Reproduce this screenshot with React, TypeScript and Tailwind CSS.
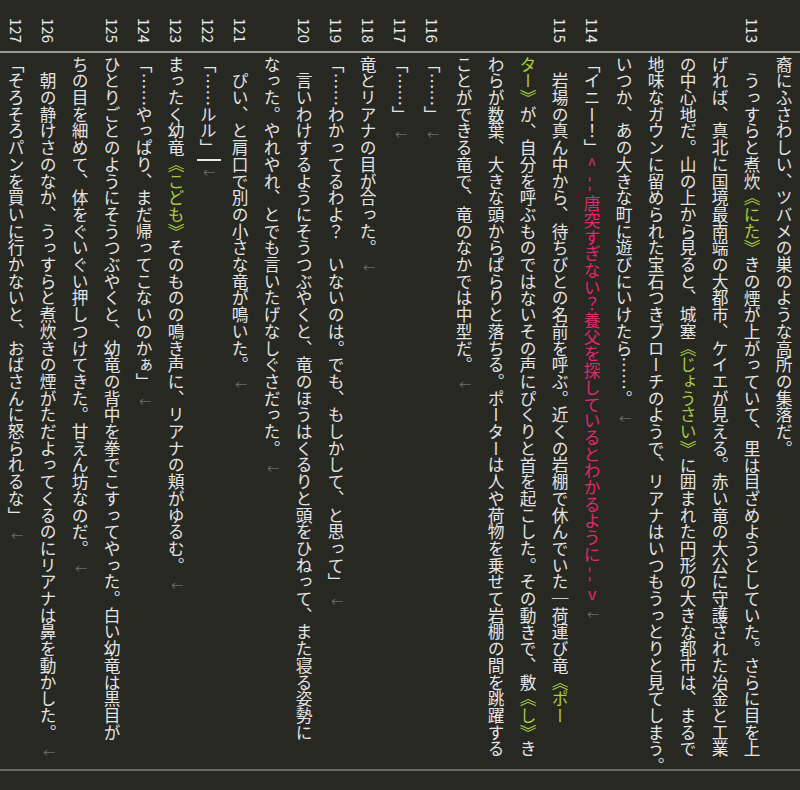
import React from "react";

type Col = { n?: number; t: string; end?: boolean; pink?: string; cursor?: boolean };

const cols: Col[] = [
  { t: "裔にふさわしい、ツバメの巣のような高所の集落だ。" },
  { n: 113, t: "　うっすらと煮炊《にた》きの煙が上がっていて、里は目ざめようとしていた。さらに目を上" },
  { t: "げれば、真北に国境最南端の大都市、ケイエが見える。赤い竜の大公に守護された冶金と工業" },
  { t: "の中心地だ。山の上から見ると、城塞《じょうさい》に囲まれた円形の大きな都市は、まるで" },
  { t: "地味なガウンに留められた宝石つきブローチのようで、リアナはいつもうっとりと見てしまう。" },
  { t: "いつか、あの大きな町に遊びにいけたら……。", end: true },
  { n: 114, t: "「イニー！」", pink: "唐突すぎない？養父を探しているとわかるように", end: true },
  { n: 115, t: "　岩場の真ん中から、待ちびとの名前を呼ぶ。近くの岩棚で休んでいた｜荷運び竜《ポー" },
  { t: "ター》が、自分を呼ぶものではないその声にぴくりと首を起こした。その動きで、敷《し》き" },
  { t: "わらが数葉、大きな頭からぱらりと落ちる。ポーターは人や荷物を乗せて岩棚の間を跳躍する" },
  { t: "ことができる竜で、竜のなかでは中型だ。", end: true },
  { n: 116, t: "「……」", end: true },
  { n: 117, t: "「……」", end: true },
  { n: 118, t: "竜とリアナの目が合った。", end: true },
  { n: 119, t: "「……わかってるわよ？　いないのは。でも、もしかして、と思って」", end: true },
  { n: 120, t: "　言いわけするようにそうつぶやくと、竜のほうはくるりと頭をひねって、また寝る姿勢に" },
  { t: "なった。やれやれ、とでも言いたげなしぐさだった。", end: true },
  { n: 121, t: "　ぴい、と肩口で別の小さな竜が鳴いた。", end: true },
  { n: 122, t: "「……ルル」", end: true, cursor: true },
  { n: 123, t: "まったく幼竜《こども》そのものの鳴き声に、リアナの頬がゆるむ。", end: true },
  { n: 124, t: "「……やっぱり、まだ帰ってこないのかぁ」", end: true },
  { n: 125, t: "ひとりごとのようにそうつぶやくと、幼竜の背中を拳でこすってやった。白い幼竜は黒目が" },
  { t: "ちの目を細めて、体をぐいぐい押しつけてきた。甘えん坊なのだ。", end: true },
  { n: 126, t: "　朝の静けさのなか、うっすらと煮炊きの煙がただよってくるのにリアナは鼻を動かした。", end: true },
  { n: 127, t: "「そろそろパンを買いに行かないと、おばさんに怒られるな」", end: true },
];

function render(t: string) {
  const parts = t.split(/(《[^》]*》|《[^》]*$|^[^《]*》)/).filter(Boolean);
  return parts.map((p, i) =>
    p.includes("《") || p.includes("》") ? (
      <span key={i} className="text-[#a8cc3c]">{p}</span>
    ) : (
      <span key={i}>{p}</span>
    )
  );
}

const Arrow = () => (
  <span className="inline-block [writing-mode:horizontal-tb] text-[12px] leading-none text-[#6f6f6a] mt-[6px] ml-[2px]">←</span>
);

export default function App() {
  return (
    <div
      className="w-[800px] h-[790px] bg-[#282823] flex flex-row-reverse overflow-hidden text-[#e4e4e4]"
      style={{ fontFamily: '"Noto Sans CJK JP", "Noto Sans", sans-serif' }}
    >
      {cols.map((c, i) => (
        <div key={i} className="w-[32px] shrink-0 flex flex-col">
          <div className="h-[53px] border-b-2 border-[#9a9a95] flex justify-center pt-[18px]">
            {c.n && (
              <span className="[writing-mode:vertical-rl] text-[15px] leading-none text-[#e8e8e8]">{c.n}</span>
            )}
          </div>
          <div className="h-[718px] border-b-2 border-[#6a6a65] flex justify-center pt-[3px]">
            <div className="[writing-mode:vertical-rl] text-[16.7px] leading-[20px] whitespace-nowrap">
              {render(c.t)}
              {c.pink && (
                <span className="text-[#e2286c]">
                  <span className="ml-[6px] [text-orientation:upright]">^</span>
                  {" - - "}
                  {c.pink}
                  {" - - "}
                  <span className="[text-orientation:upright]">v</span>
                </span>
              )}
              {c.cursor && <span className="inline-block w-[24px] h-[2px] bg-[#e8e8e8] mt-[3px] -mr-[2px]" />}
              {c.end && <Arrow />}
            </div>
          </div>
        </div>
      ))}
    </div>
  );
}
